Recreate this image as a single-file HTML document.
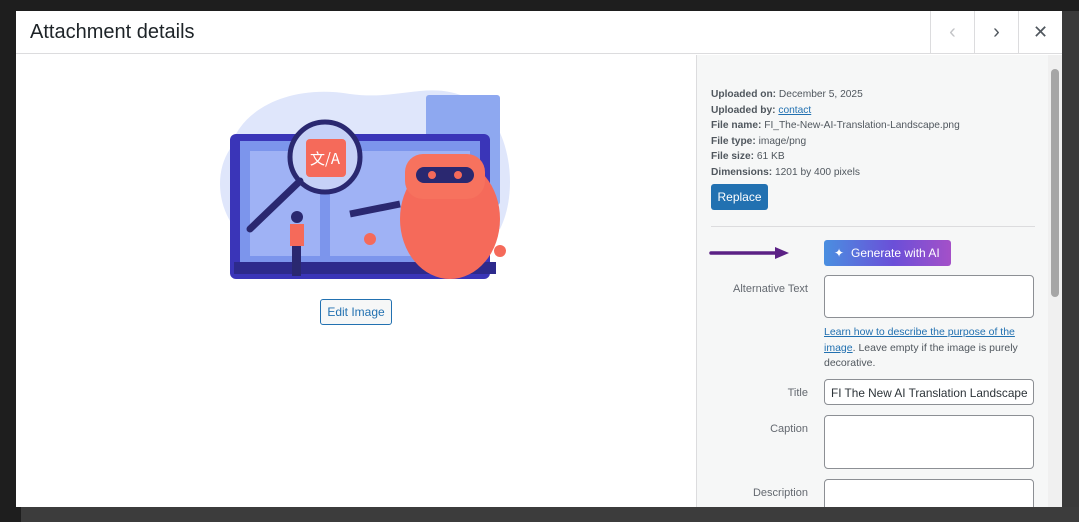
<!DOCTYPE html>
<html><head><meta charset="utf-8"><style>
*{box-sizing:border-box;margin:0;padding:0}
body{width:1079px;height:522px;overflow:hidden;background:#3a3a3a;font-family:"Liberation Sans",sans-serif;position:relative}
.adminbar{position:absolute;left:0;top:0;width:1079px;height:11px;background:#1e1e1e;color:#777;font-size:13px}
.leftmenu{position:absolute;left:0;top:0;width:21px;height:522px;background:#1e1e1e}
.modal{position:absolute;left:16px;top:11px;width:1046px;height:496px;background:#fff;overflow:hidden}
.hdr{position:absolute;left:0;top:0;width:1046px;height:43px;border-bottom:1px solid #dcdcde}
.hdr h1{position:absolute;left:14px;top:10px;font-size:20px;font-weight:normal;color:#1d2327}
.nb{position:absolute;top:0;width:44px;height:43px;border-left:1px solid #dcdcde;color:#50575e;font-size:20px;text-align:center;line-height:42px}
.side{position:absolute;left:680px;top:44px;width:352px;height:452px;background:#f6f7f7;border-left:1px solid #dcdcde;font-size:11px;color:#50575e;overflow:hidden}
.scroll{position:absolute;left:1032px;top:44px;width:14px;height:452px;background:#f0f0f0}
.thumb{position:absolute;left:3px;top:14px;width:8px;height:228px;background:#a6a6a6;border-radius:4px}
.info{position:absolute;left:14px;top:32px;line-height:15.6px;font-size:10.2px}
.info b{color:#50575e}
.info a{color:#2271b1}
.btn{position:absolute;left:14px;top:129px;width:57px;height:26px;background:#2271b1;color:#fff;border-radius:3px;font-size:12px;text-align:center;line-height:26px}
.sep{position:absolute;left:14px;top:171px;width:324px;height:1px;background:#dcdcde}
.gen{position:absolute;left:127px;top:185px;width:127px;height:26px;border-radius:3px;background:linear-gradient(90deg,#4a8fe0,#6b4fd8 55%,#a450c8);color:#fff;font-size:12px;line-height:26px;padding-left:27px}
.lbl{position:absolute;right:240px;text-align:right;font-size:11px;color:#646970}
.inp{position:absolute;left:127px;width:210px;background:#fff;border:1px solid #8c8f94;border-radius:4px}
.edit{position:absolute;left:304px;top:288px;width:72px;height:26px;border:1px solid #2271b1;border-radius:3px;color:#2271b1;font-size:12px;text-align:center;line-height:24px;background:#f6f7f7}
</style></head><body>
<div class="adminbar"></div>
<div class="leftmenu"></div>
<div style="position:absolute;left:21px;top:507px;width:1058px;height:15px;background:#3c3c3c"></div>
<div class="modal">
 <div class="hdr"><h1>Attachment details</h1>
  <div class="nb" style="left:914px;color:#c3c4c7">&#8249;</div>
  <div class="nb" style="left:958px">&#8250;</div>
  <div class="nb" style="left:1002px;font-size:18px">&#10005;</div>
 </div>
 <svg style="position:absolute;left:184px;top:68px" width="320" height="200" viewBox="0 0 320 200">
  <path d="M30 70 C40 30 90 5 150 15 C200 22 230 0 270 20 C310 40 320 110 300 150 L60 170 C20 150 10 100 30 70Z" fill="#dfe6fb"/>
  <rect x="226" y="16" width="74" height="110" rx="3" fill="#8ea8f0"/>
  <rect x="30" y="55" width="260" height="145" rx="6" fill="#3a35b8"/>
  <rect x="40" y="62" width="240" height="122" fill="#7c95ec"/>
  <rect x="50" y="72" width="70" height="105" fill="#9fb2f5"/>
  <rect x="130" y="72" width="140" height="105" fill="#9fb2f5"/>
  <rect x="34" y="183" width="262" height="12" fill="#2d2a8c"/>
  <circle cx="125" cy="78" r="35" fill="#c6d1f7" stroke="#2a2870" stroke-width="5"/>
  <rect x="106" y="60" width="40" height="38" rx="4" fill="#f56a5a"/>
  <text x="110" y="85" font-size="15" fill="#fff" font-family="Noto Sans CJK SC,sans-serif">文/A</text>
  <line x1="100" y1="102" x2="50" y2="150" stroke="#2a2870" stroke-width="7" stroke-linecap="round"/>
  <ellipse cx="250" cy="140" rx="50" ry="60" fill="#f56a5a"/>
  <rect x="205" y="75" width="80" height="45" rx="18" fill="#f7725e"/>
  <rect x="216" y="88" width="58" height="16" rx="8" fill="#2a2870"/>
  <circle cx="232" cy="96" r="4" fill="#f56a5a"/><circle cx="258" cy="96" r="4" fill="#f56a5a"/>
  <line x1="150" y1="135" x2="200" y2="125" stroke="#2a2870" stroke-width="7"/>
  <circle cx="170" cy="160" r="6" fill="#f56a5a"/>
  <circle cx="300" cy="172" r="6" fill="#f56a5a"/>
  <rect x="90" y="145" width="14" height="22" fill="#f56a5a"/>
  <rect x="92" y="167" width="9" height="30" fill="#2a2870"/>
  <circle cx="97" cy="138" r="6" fill="#2a2870"/>
 </svg>
 <div class="edit">Edit Image</div>
 <div class="side">
  <div class="info">
   <b>Uploaded on:</b> December 5, 2025<br>
   <b>Uploaded by:</b> <a href="#">contact</a><br>
   <b>File name:</b> FI_The-New-AI-Translation-Landscape.png<br>
   <b>File type:</b> image/png<br>
   <b>File size:</b> 61 KB<br>
   <b>Dimensions:</b> 1201 by 400 pixels
  </div>
  <div class="btn">Replace</div>
  <div class="sep"></div>
  <svg style="position:absolute;left:12px;top:192px" width="82" height="12"><line x1="2" y1="6" x2="68" y2="6" stroke="#5b2185" stroke-width="3.5" stroke-linecap="round"/><path d="M66 0 L80 6 L66 12Z" fill="#5b2185"/></svg>
  <div class="gen"><span style="position:absolute;left:10px;top:0;font-size:12px">✦</span>Generate with AI</div>
  <div class="lbl" style="top:228px">Alternative Text</div>
  <div class="inp" style="top:220px;height:43px"></div>
  <div style="position:absolute;left:127px;top:270px;width:210px;line-height:15.5px;font-size:10.5px"><a href="#" style="color:#2271b1">Learn how to describe the purpose of the image</a>. Leave empty if the image is purely decorative.</div>
  <div class="lbl" style="top:332px">Title</div>
  <div class="inp" style="top:324px;height:26px;font-size:11.8px;color:#2c3338;padding:6px 6px;white-space:nowrap;overflow:hidden">FI The New AI Translation Landscape</div>
  <div class="lbl" style="top:368px">Caption</div>
  <div class="inp" style="top:360px;height:54px"></div>
  <div class="lbl" style="top:432px">Description</div>
  <div class="inp" style="top:424px;height:40px"></div>
 </div>
 <div class="scroll"><div class="thumb"></div></div>
</div>
</body></html>
